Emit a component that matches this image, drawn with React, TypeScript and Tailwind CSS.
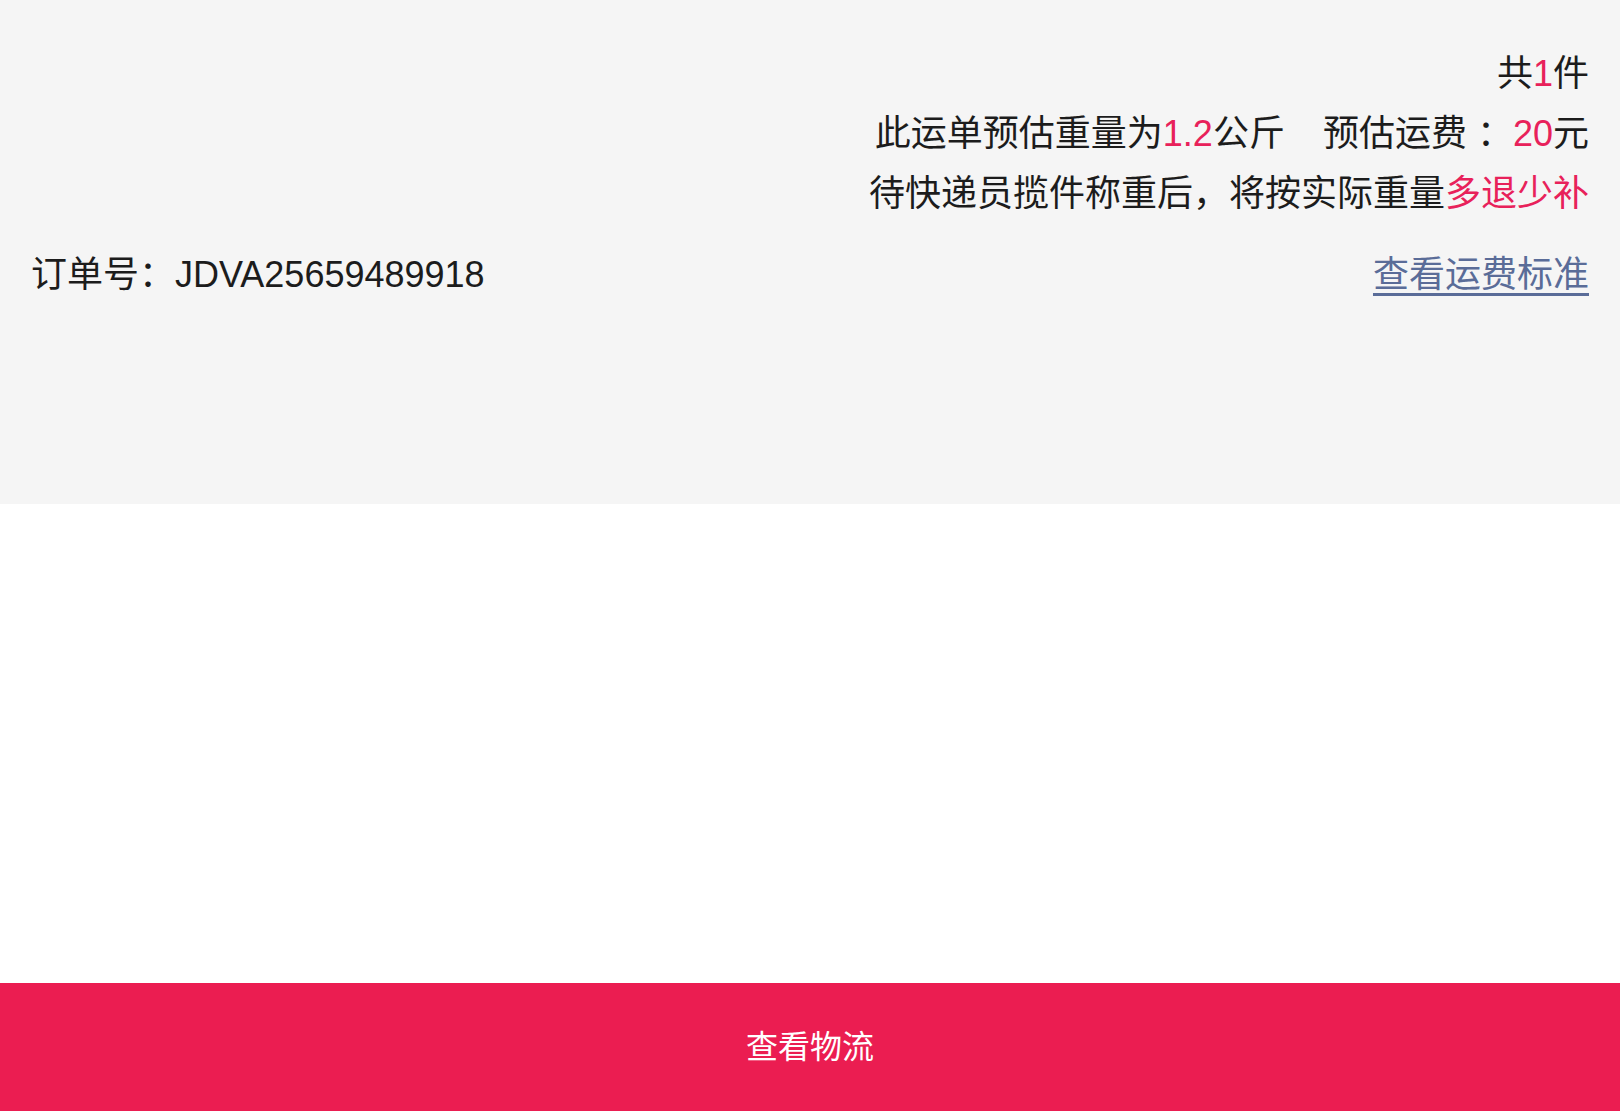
import React from "react";

export default function App() {
  return (
    <div
      className="flex h-[1111px] w-full flex-col bg-white text-[#1c1c1c]"
      style={{ fontFamily: '"Liberation Sans", "Noto Sans CJK SC", sans-serif' }}
    >
      <div className="h-[504px] shrink-0 bg-[#f5f5f5] px-[31px] pt-[44px]">
        <div className="flex flex-col items-end text-[36px] leading-[60px]">
          <div>
            共<span className="text-[#e8215a]">1</span>件
          </div>
          <div>
            此运单预估重量为<span className="text-[#e8215a]">1.2</span>公斤
            <span className="ml-[38px]">预估运费</span>
            <span className="ml-[10px]">：</span>
            <span className="text-[#e8215a]">20</span>元
          </div>
          <div>
            待快递员揽件称重后，将按实际重量<span className="text-[#e8215a]">多退少补</span>
          </div>
        </div>
        <div className="mt-[21px] flex items-center justify-between text-[36px] leading-[60px]">
          <div>订单号：JDVA25659489918</div>
          <a className="text-[#5a6c98] underline decoration-[3px] underline-offset-[6px]">
            查看运费标准
          </a>
        </div>
      </div>
      <div className="flex-1 bg-white" />
      <button className="flex h-[128px] shrink-0 items-center justify-center bg-[#eb1d51] text-[32px] text-white">
        查看物流
      </button>
    </div>
  );
}
